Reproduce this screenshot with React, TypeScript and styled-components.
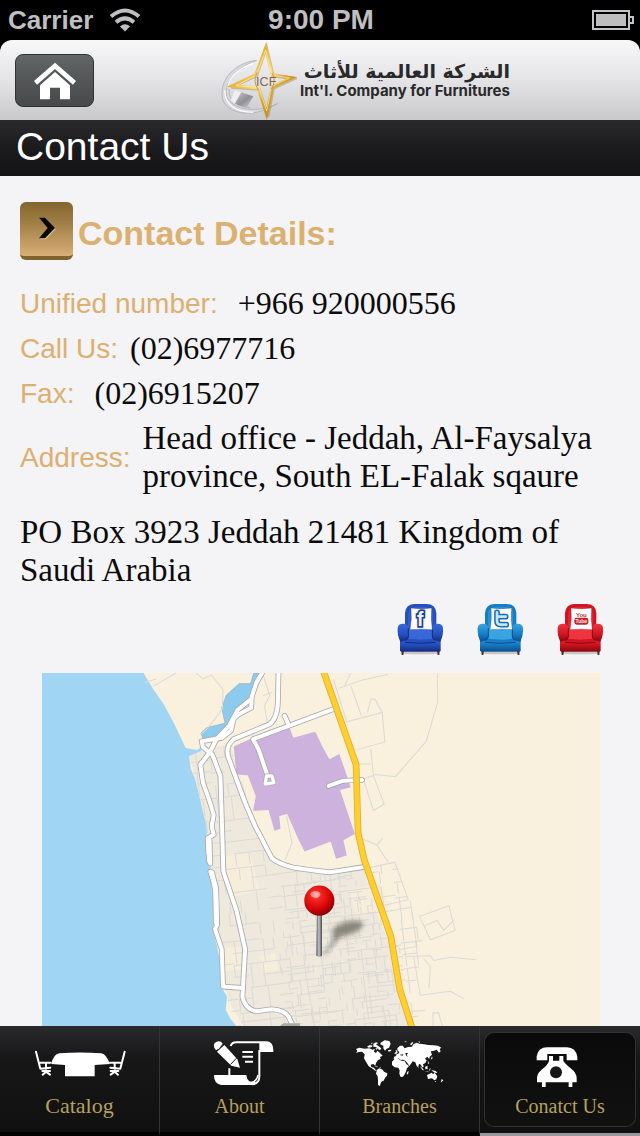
import React from "react";
import styled, { createGlobalStyle, css } from "styled-components";

const GlobalStyle = createGlobalStyle`
  * { box-sizing: border-box; }
  html, body { margin: 0; background: #000; }
  body { font-family: "Liberation Sans", Arial, sans-serif; }
`;

const sans = `"Liberation Sans", Arial, sans-serif`;
const serif = `"Liberation Serif", "Times New Roman", serif`;
const gold = "#dbb071";

const Screen = styled.div`
  display: flex;
  flex-direction: column;
  height: 100vh;
  min-height: 900px;
  background: #000;
`;

const StatusBar = styled.div`
  display: grid;
  grid-template-columns: 1fr auto 1fr;
  align-items: center;
  height: 40px;
  padding: 0 6px 0 8px;
  color: #bfbfc1;
  font: bold 26px/40px ${sans};
`;

const StatusSide = styled.div<{ $end?: boolean }>`
  display: flex;
  align-items: center;
  gap: 16px;
  justify-content: ${(p) => (p.$end ? "flex-end" : "flex-start")};
`;

const Clock = styled.span`
  font-size: 28px;
`;

const Header = styled.header`
  display: flex;
  align-items: center;
  gap: 126px;
  height: 80px;
  padding-left: 15px;
  border-radius: 12px 12px 0 0;
  background: linear-gradient(#f8f8f9, #e4e4e6 50%, #c9c9cc);
`;

const HomeButton = styled.button`
  display: block;
  width: 79px;
  height: 53px;
  padding: 0;
  border: 1px solid #2f3133;
  border-radius: 8px;
  background: linear-gradient(#636667, #535657 50%, #47494a);
  svg { display: block; width: 100%; height: 100%; }
`;

const Brand = styled.div`
  display: flex;
  align-items: center;
  gap: 3px;
  color: #29292b;
  svg { display: block; width: 77px; height: 80px; flex: none; }
`;

const BrandNames = styled.div`
  display: flex;
  flex-direction: column;
  white-space: nowrap;
`;

const BrandArabic = styled.span`
  font: bold 19px/22px "DejaVu Sans", sans-serif;
`;

const BrandLatin = styled.span`
  font: 700 15px/18px Inter, sans-serif;
`;

const TitleBar = styled.div`
  height: 56px;
  padding-left: 16px;
  background: linear-gradient(#2a2a2c, #1b1b1d 50%, #131315);
  h1 {
    margin: 0;
    color: #fff;
    font: 39px/54px ${sans};
  }
`;

const Content = styled.main`
  flex: 1;
  min-height: 0;
  display: flex;
  flex-direction: column;
  padding: 26px 36px 0 20px;
  background: #f4f3f5;
`;

const SectionHeading = styled.div`
  display: flex;
  align-items: center;
  gap: 5px;
  height: 58px;
  h2 {
    margin: 4px 0 0;
    color: ${gold};
    font: bold 34px/40px ${sans};
  }
`;

const ArrowTile = styled.span`
  display: flex;
  width: 53px;
  height: 58px;
  border-radius: 6px;
  border-bottom: 4px solid #82632d;
  background: linear-gradient(#82662f, #a5834b 45%, #d9b077);
  svg { display: block; width: 53px; height: 54px; }
`;

const Details = styled.dl`
  margin: 20px 0 0;
`;

const DetailRow = styled.div<{ $gap: number; $tall?: boolean }>`
  display: flex;
  align-items: center;
  gap: ${(p) => p.$gap}px;
  min-height: 45px;
  ${(p) => p.$tall && css`min-height: 84px;`}
  dt {
    flex: none;
    padding-top: 2px;
    color: ${gold};
    font: 28px/40px ${sans};
  }
  dd {
    margin: 0;
    color: #0b0b0c;
    font: ${(p) => (p.$tall ? 33 : 32)}px/38px ${serif};
  }
`;

const PostBox = styled.p`
  margin: 14px 0 0;
  color: #0b0b0c;
  font: 33px/38px ${serif};
`;

const SocialLinks = styled.div`
  display: flex;
  justify-content: flex-end;
  gap: 33px;
  margin-top: 14px;
  a { display: block; }
  svg { display: block; width: 47px; height: 54px; }
`;

const MapFrame = styled.div`
  flex: 1;
  min-height: 0;
  margin: 16px 4px 0 22px;
  svg { display: block; width: 100%; height: 100%; }
`;

const TabBar = styled.nav`
  display: grid;
  grid-template-columns: repeat(4, 1fr);
  height: 110px;
  background: #050506;
`;

const Tab = styled.a<{ $active?: boolean }>`
  display: flex;
  border-right: 1px solid #343436;
  border-bottom: 4px solid #000;
  padding: 7px 5px;
  background: linear-gradient(#2a2a2c, #171718 30%, #101011);
  text-decoration: none;
  color: #b7a05c;
  ${(p) => p.$active && css`
    border-right: 0;
    border-bottom: 3px solid #99989b;
  `}
`;

const TabFace = styled.span<{ $active?: boolean }>`
  flex: 1;
  display: flex;
  flex-direction: column;
  align-items: center;
  gap: 7px;
  padding-top: 4px;
  border-radius: 9px;
  svg { display: block; width: 100px; height: 50px; flex: none; }
  ${(p) => p.$active && css`
    background: linear-gradient(#0a0a0b, #111112);
    box-shadow: 0 0 0 1px #343436;
  `}
`;

const TabLabel = styled.span<{ $large?: boolean }>`
  font: ${(p) => (p.$large ? 22 : 20)}px/24px ${serif};
`;

const WifiIcon = () => (
  <svg width="32" height="24" viewBox="0 0 32 24" fill="none" stroke="#bfbfc1" aria-hidden="true">
    <path d="M2 8.6Q16-3.6 30 8.6" strokeWidth="4" />
    <path d="M7 14.2Q16 6.6 25 14.2" strokeWidth="4" />
    <path d="M11 18.4Q16 14 21 18.4L16 23.5Z" fill="#bfbfc1" stroke="none" />
  </svg>
);

const BatteryIcon = () => (
  <svg width="42" height="20" viewBox="0 0 42 20" aria-hidden="true">
    <rect x="1" y="1" width="36" height="18" fill="none" stroke="#c4c4c6" strokeWidth="2" />
    <rect x="4" y="4" width="30" height="12" fill="#bdbdbf" />
    <path d="M38 7h3v6h-3" fill="none" stroke="#c4c4c6" strokeWidth="2" />
  </svg>
);

const HomeIcon = () => (
  <svg viewBox="48 165 231 153" fill="#fff" aria-hidden="true">
    <path d="M102 243L165 188L228 243L219 254L165 207L111 254Z" />
    <path d="M120 256L165 216L210 256V298H180V263H150V298H120Z" />
  </svg>
);

const BrandMark = () => (
  <svg viewBox="60 9 231 240" aria-hidden="true">
    <defs>
      <linearGradient id="gold" x1="0" y1="0" x2="1" y2="1">
        <stop offset="0" stopColor="#c88b12" />
        <stop offset=".35" stopColor="#efc04b" />
        <stop offset=".5" stopColor="#f8dc7c" />
        <stop offset=".65" stopColor="#dca52b" />
        <stop offset="1" stopColor="#b9790c" />
      </linearGradient>
      <linearGradient id="silver" x1="0" y1="0" x2="1" y2="1">
        <stop offset="0" stopColor="#dcdce0" />
        <stop offset=".6" stopColor="#8f8f97" />
        <stop offset="1" stopColor="#d4d4d8" />
      </linearGradient>
    </defs>
    <path d="M170 70C100 78 62 130 66 176C70 226 150 252 232 200C172 230 96 220 80 178C72 140 106 92 170 70Z" fill="#d9d9dd" stroke="#a6a6ac" strokeWidth="2" />
    <path d="M158 80C104 98 84 132 84 152M74 160C74 204 108 226 160 226" fill="none" stroke="#fbfbfc" strokeWidth="4" />
    <path d="M88 156C84 186 104 206 150 212" fill="none" stroke="#b4b4ba" strokeWidth="3" />
    <path d="M104 160L160 178L140 212C118 208 104 200 92 190Z" fill="url(#silver)" />
    <path d="M104 160L124 166L104 200L92 190Z" fill="#f0f0f3" />
    <path d="M197 28L217 113L281 122L218 150L201 236L175 153L92 147L167 113Z" fill="none" stroke="#8b6a28" strokeWidth="10" opacity=".35" transform="translate(2 3)" />
    <path d="M197 32L216 113L276 122L217 150L200 232L175 153L96 147L167 113Z" fill="none" stroke="url(#gold)" strokeWidth="9" />
    <path d="M197 40L215 114L268 123L215 149L200 222L177 151L108 146L169 115Z" fill="none" stroke="#fff1ae" strokeWidth="2" />
    <path d="M172 106Q156 132 176 160M216 108Q230 132 214 156" fill="none" stroke="#c99b3f" strokeWidth="3" />
    <text x="168" y="146" fontFamily="Liberation Sans, sans-serif" fontSize="38" fill="#8a6844">ICF</text>
  </svg>
);

const ChevronIcon = () => (
  <svg viewBox="61 37 159 162" aria-hidden="true">
    <path d="M120 87h18l30 31-30 31h-18l28-31Z" fill="#e6c590" />
    <path d="M118 84h18l30 31-30 31h-18l26-31Z" fill="#080706" />
  </svg>
);

type ChairProps = {
  id: string;
  light: string;
  base: string;
  dark: string;
  children: React.ReactNode;
};

const Chair = ({ id, light, base, dark, children }: ChairProps) => (
  <svg viewBox="0 0 141 162" aria-hidden="true">
    <defs>
      <linearGradient id={id} x1="0" y1="0" x2="0" y2="1">
        <stop offset="0" stopColor={light} />
        <stop offset=".6" stopColor={base} />
        <stop offset="1" stopColor={dark} />
      </linearGradient>
    </defs>
    <ellipse cx="70" cy="150" rx="60" ry="4" fill="#c9c6c4" />
    <path d="M13 138h9l-3 18h-5ZM119 138h9l-1 18h-5Z" fill="#46302c" />
    <path d="M24 90V30Q26 3 54 3H88Q116 3 118 30V90Z" fill={base} />
    <path d="M33 80V34Q34 11 56 11H86Q108 11 109 34V80Z" fill={light} opacity=".55" />
    <path d="M9 92H131V142Q131 146 126 146H14Q9 146 9 142Z" fill={`url(#${id})`} />
    <path d="M32 78H108L116 106Q70 114 24 106Z" fill={light} />
    <path d="M24 106Q70 114 116 106V116Q70 122 24 116Z" fill={base} />
    <path d="M2 74Q4 62 18 62Q34 62 34 76V104Q34 110 26 112L10 116Q0 96 2 74ZM138 74Q136 62 122 62Q106 62 106 76V104Q106 110 114 112L130 116Q140 96 138 74Z" fill={`url(#${id})`} />
    <path d="M34 76V102L26 112M106 76V102L114 112M24 118Q70 124 116 118" fill="none" stroke={dark} strokeWidth="3" />
    <path d="M42 15Q73 19 104 15Q101 48 106 80Q73 77 39 80Q45 48 42 15Z" fill="#fbfafc" stroke={dark} strokeWidth="1" />
    {children}
  </svg>
);

const FacebookChair = () => (
  <Chair id="chairBlue" light="#3868d8" base="#2450bd" dark="#142a80">
    <text x="60" y="68" fontFamily="Liberation Sans, sans-serif" fontWeight="bold" fontSize="58" fill="#e8f2fd" stroke="#20408f" strokeWidth="10" paintOrder="stroke">f</text>
  </Chair>
);

const TwitterChair = () => (
  <Chair id="chairSky" light="#39a4e2" base="#167cc3" dark="#0a4c90">
    <path d="M60 28V54Q60 65 72 65H88M60 41H86" fill="none" stroke="#1a6caa" strokeWidth="17" strokeLinecap="round" />
    <path d="M60 28V54Q60 65 72 65H88M60 41H86" fill="none" stroke="#c4e6f8" strokeWidth="8" strokeLinecap="round" />
  </Chair>
);

const YoutubeChair = () => (
  <Chair id="chairRed" light="#ef3440" base="#d01422" dark="#86070f">
    <text x="73" y="41" textAnchor="middle" fontFamily="Liberation Sans, sans-serif" fontWeight="bold" fontSize="18" fill="#bf3a3d">You</text>
    <rect x="52" y="44" width="42" height="21" rx="7" fill="#c3282e" />
    <text x="73" y="60" textAnchor="middle" fontFamily="Liberation Sans, sans-serif" fontWeight="bold" fontSize="15" fill="#fbe9e9">Tube</text>
  </Chair>
);

/** Pseudo-random value in 0..1 that is stable for a street cell. */
const cellValue = (x: number, y: number, seed: number) => {
  const v = Math.sin(x * 127.1 + y * 311.7 + seed * 74.7) * 43758.5453;
  return v - Math.floor(v);
};

/** A loose street grid: some block edges are left out so that blocks vary in size. */
const streets = (x0: number, y0: number, x1: number, y1: number, w: number, h: number, keep: number) => {
  let d = "";
  for (let r = 0; y0 + r * h < y1; r++) {
    for (let c = 0; x0 + c * w < x1; c++) {
      const x = x0 + c * w;
      const y = y0 + r * h + (cellValue(c >> 2, r, 3) - 0.5) * 14;
      if (cellValue(c, r, 1) < keep) d += `M${x} ${y.toFixed(0)}h${w}`;
      if (cellValue(c, r, 2) < keep) d += `M${x + Math.round(cellValue(r >> 1, c, 4) * 12)} ${y.toFixed(0)}v${h}`;
    }
  }
  return d;
};

const mainRoads = [
  "M700 36L680 70L666 112L664 146L626 166L612 178L604 214L576 236L516 246L520 264L548 286L572 350L577 500L581 636L620 752L646 868L638 1010Q646 1048 680 1054L724 1048Q764 1050 776 1070L792 1104",
  "M664 120L624 152L598 200L560 240L540 280L512 316L520 370L538 420L552 466L546 500L552 526L534 536L536 580L542 612",
  "M542 636L558 680L562 796L556 808L576 868L580 980L638 984",
  "M746 36L744 130Q742 180 718 196L612 240Q586 262 596 294L646 430L676 500L726 596Q744 612 790 624Q850 634 900 638L1004 622",
  "M910 150L670 240L686 270L712 346",
  "M776 196L764 170",
];

const CityMap = () => (
  <svg viewBox="36 42 1674 1056" preserveAspectRatio="xMidYMin slice" role="img" aria-label="Map of Jeddah">
    <defs>
      <clipPath id="city">
        <path d="M480 290L530 268L600 256L660 440L730 600L800 630L1000 625L1094 608L1134 720L1180 860L1150 1000L1170 1098H620L590 1010L575 900L552 700L530 500Z" />
      </clipPath>
      <clipPath id="core">
        <path d="M740 900L800 650L960 640L1040 760L1120 880L1110 1098H780Z" />
      </clipPath>
      <radialGradient id="ball" cx=".4" cy=".32" r=".68">
        <stop offset="0" stopColor="#ff8f84" />
        <stop offset=".2" stopColor="#f42a24" />
        <stop offset=".65" stopColor="#d90508" />
        <stop offset="1" stopColor="#8c0003" />
      </radialGradient>
      <linearGradient id="stick">
        <stop offset="0" stopColor="#54545a" />
        <stop offset=".45" stopColor="#c4c4ca" />
        <stop offset="1" stopColor="#47474d" />
      </linearGradient>
      <filter id="soft" x="-30%" y="-30%" width="160%" height="160%">
        <feGaussianBlur stdDeviation="8" />
      </filter>
    </defs>
    <rect x="36" y="42" width="1674" height="1056" fill="#f9f0de" />
    <path d="M36 42H342L372 92L404 138L436 198L468 266L500 272L520 262L510 284L478 290L484 330L508 386L524 440L532 500L530 560L542 620L546 680L556 750L550 810L562 860L576 930L580 990L592 1010L588 1050L602 1076L620 1098H36Z" fill="#a0d6f3" />
    <path d="M576 146L590 108L628 74H662L672 42H700L670 112L612 176L588 224L520 238L514 222L530 206L586 192Z" fill="#8dcbee" stroke="#9aa9ae" strokeWidth="2" />
    <path d="M480 290L530 268L600 256L660 440L730 600L800 630L1000 625L1040 760L1094 900L1140 1098H640L600 1030L580 960L560 800L552 700L530 500Z" fill="#eee9dc" />
    <path d="M582 590L660 580L690 690L612 712L586 640ZM584 864L632 860L634 930L584 934ZM956 690L1046 670L1080 740L980 770ZM690 890L736 880L746 930L700 940Z" fill="#f7eddb" />
    <g fill="none" stroke="#dcd9d6" strokeWidth="3">
      <g clipPath="url(#city)">
        <path d={streets(420, 240, 1300, 1300, 42, 36, 0.66)} transform="rotate(-7 800 700)" />
      </g>
      <g clipPath="url(#core)">
        <path d={streets(640, 560, 1240, 1300, 26, 22, 0.5)} transform="rotate(-7 800 700)" />
      </g>
      <path d="M370 82L440 42M345 70L380 60M500 42L520 60L545 48L580 92L578 150L540 200L515 225M700 50L720 110L704 140L714 200M700 110L726 100" />
      <path d="M1221 42L1222 130L1188 246L1096 352L1036 346L1000 360L1030 454L1062 434L1030 350L1022 270M980 272L1064 248L1056 160L950 188L910 60M925 88L995 64L1074 46M962 80L994 170M1012 160L1022 120L1036 122L1056 160M944 80L962 42M980 314L1020 314M1000 540L1040 556L1058 536M1040 556L1074 608" />
      <path d="M1010 626L1094 608L1134 720L1050 740M1140 724L1160 860L1106 870M1168 770L1256 738L1274 812L1200 840ZM1180 800L1220 782L1240 812L1272 780M1130 890L1200 888L1210 902L1260 892L1336 900M1150 890L1170 1006L1260 994L1300 1016M1180 896L1200 920L1196 986M1144 1054L1184 1052M1208 1098V1060L1224 1058L1236 1098" />
      <path d="M770 470L786 550L766 600" />
    </g>
    <path d="M612 262L660 240L780 208L790 236L856 218L874 256L898 300L928 284L962 384L930 392L974 524L940 542L950 588L918 598L902 546L824 576L804 536L772 464L748 470L752 508L734 514L716 452L670 454L678 410L654 348L620 346Z" fill="#ccb2dc" />
    <g fill="none" strokeLinejoin="round" strokeLinecap="round">
      {mainRoads.map((d) => <path key={d} d={d} stroke="#a9a9ad" strokeWidth="17" />)}
      <path d="M546 640L558 690L560 790M538 540L540 606" stroke="#a9a9ad" strokeWidth="20" />
      <path d="M896 380L940 364L996 362" stroke="#9b9bac" strokeWidth="16" />
      {mainRoads.map((d) => <path key={d} d={d} stroke="#fefefe" strokeWidth="12" />)}
      <path d="M546 640L558 690L560 790M538 540L540 606" stroke="#fefefe" strokeWidth="15" />
      <path d="M896 380L940 364L996 362" stroke="#fefefe" strokeWidth="12" />
      <path d="M710 350L726 350L732 370L706 374Z" stroke="#a9a9ad" strokeWidth="14" />
      <path d="M710 350L726 350L732 370L706 374Z" stroke="#fefefe" strokeWidth="10" />
      <path d="M878 30L978 316L984 520L1002 600L1082 830L1108 986L1146 1106" stroke="#e4ac2f" strokeWidth="20" />
      <path d="M878 30L978 316L984 520L1002 600L1082 830L1108 986L1146 1106" stroke="#fdd02f" strokeWidth="15" />
    </g>
    <path d="M760 1090H810V1098H750Z" fill="#a7ada2" />
    <path d="M874 890L912 836Q896 806 932 792Q976 776 1000 790Q994 822 932 830L884 884Z" fill="#55554c" opacity=".65" filter="url(#soft)" />
    <path d="M861 756H876V888Q868 893 859 888Z" fill="url(#stick)" />
    <circle cx="868" cy="723" r="45" fill="url(#ball)" />
    <ellipse cx="856" cy="704" rx="15" ry="10" fill="#fff" opacity=".45" />
  </svg>
);

const CatalogIcon = () => (
  <svg viewBox="90 50 300 150" aria-hidden="true">
    <path d="M154 131Q160 102 178 99Q240 94 304 99Q320 102 329 131L284 134V168H195V134Z" fill="#fff" />
    <g fill="none" stroke="#fff" strokeWidth="6" strokeLinecap="round" strokeLinejoin="round">
      <path d="M108 94L121 145L151 142M121 127H152M138 129V155M128 163L138 154L150 163M127 152H150" />
      <path d="M374 94L361 145L331 142M361 127H330M344 129V155M354 163L344 154L332 163M355 152H332" />
    </g>
  </svg>
);

const AboutIcon = () => (
  <svg viewBox="570 50 300 150" aria-hidden="true">
    <path d="M692 77Q696 66 708 66H800Q818 68 817 92H778V168Q778 191 756 192" fill="none" stroke="#fff" strokeWidth="6" />
    <path d="M778 66H800Q820 68 818 94H778Z" fill="#fff" />
    <path d="M642 164H736Q738 184 752 186L766 180L764 194H664Q642 192 642 164Z" fill="#fff" />
    <path d="M737 164Q740 186 754 186Q770 184 774 164" fill="none" stroke="#fff" strokeWidth="4" />
    <path d="M727 95H759M727 109H759M735 124H759M688 144V166" fill="none" stroke="#fff" strokeWidth="6" />
    <path d="M643 82Q638 68 650 64Q662 60 668 70L658 84L648 90Z" fill="#fff" />
    <path d="M651 94L673 74L712 117L720 142L694 136Z" fill="#fff" />
    <path d="M692 132L709 114" stroke="#151516" strokeWidth="3" />
  </svg>
);

const WorldIcon = () => (
  <svg viewBox="90 50 300 150" fill="#fff" aria-hidden="true">
    <path d="M108 86L118 82L134 85L148 84L158 88L164 85L162 94L168 98L172 91L180 98L188 106L180 110L182 116L174 119L168 128L166 136L160 131L152 133L154 140L162 142L166 148L172 150L166 151L156 144L146 138L138 124L132 114L134 102L126 94L116 95L108 98L112 92Z" />
    <path d="M142 78L150 74L158 76L154 81L144 82ZM160 70L168 66L174 68L168 73L174 76L184 84L180 90L174 86L168 80L160 79ZM152 68L158 67L156 71ZM166 84L172 84L170 89Z" />
    <path d="M182 67L194 60L208 62L212 70L207 82L200 85L195 91L190 84L190 76L181 72ZM204 89L214 88L213 92L206 94ZM162 136L174 139L171 141ZM178 141L184 142L181 144Z" />
    <path d="M171 148L178 144L188 148L192 154L202 159L201 166L195 173L191 181L184 184L181 192L180 197L174 194L174 180L173 168L168 160Z" />
    <path d="M222 99L228 95L227 88L231 91L233 98L228 101ZM232 90L232 84L240 76L248 76L254 84L264 80L276 79L280 72L290 67L298 70L312 72L324 74L340 75L354 76L364 82L359 86L362 93L357 97L350 88L340 92L332 93L336 103L329 109L328 116L322 109L315 115L320 120L316 128L309 132L311 140L306 141L303 133L297 131L294 141L290 137L286 126L278 123L273 130L268 137L262 128L256 121L249 118L243 119L235 114L230 118L221 116L222 109L229 107L227 103L235 100L238 95Z" />
    <path d="M270 72L277 65L280 67L274 75ZM252 64L260 63L258 66ZM294 63L300 64L300 68Z" />
    <path d="M216 124L224 116L235 115L244 121L254 122L259 131L267 137L261 144L258 153L255 160L249 169L242 170L238 160L239 150L235 142L224 141L216 134ZM262 154L266 152L264 162L260 162Z" />
    <path d="M300 138L307 143L312 150L307 149ZM315 140L322 136L323 146L317 147ZM328 146L332 144L329 153ZM334 149L347 152L352 158L344 157L338 153ZM313 152L326 154L325 156ZM323 120L328 130L325 131ZM336 108L338 114L332 118Z" />
    <path d="M321 164L328 161L334 157L340 161L344 157L352 168L349 177L343 180L336 174L324 176ZM344 183L349 183L346 186ZM365 176L370 180L362 187ZM295 140L297 142L295 144Z" />
    <path d="M256 98L264 98L260 104L264 109L259 107ZM239 103L250 102L248 106L242 105Z" fill="#19191a" />
  </svg>
);

const PhoneIcon = () => (
  <svg viewBox="570 50 300 150" overflow="visible" aria-hidden="true">
    <path d="M650 120V108Q654 81 682 81H741Q768 82 772 110V120H740V101H682V120Z" fill="#fff" />
    <path d="M687 107H699V121H718V107H730V122Q736 130 752 144Q770 158 770 174V186H757V200H746V186H677V200H666V186H651V172Q652 157 670 144Q684 132 687 122Z" fill="#fff" />
    <circle cx="708" cy="156" r="18" fill="#171718" />
  </svg>
);

const details = [
  { label: "Unified number:", value: "+966 920000556", gap: 20 },
  { label: "Call Us:", value: "(02)6977716", gap: 12 },
  { label: "Fax:", value: "(02)6915207", gap: 20 },
  { label: "Address:", value: "Head office - Jeddah, Al-Faysalya province, South EL-Falak sqaure", gap: 12, tall: true },
];

const tabs = [
  { label: "Catalog", Icon: CatalogIcon, large: true },
  { label: "About", Icon: AboutIcon },
  { label: "Branches", Icon: WorldIcon },
  { label: "Conatct Us", Icon: PhoneIcon, active: true },
];

export default function App() {
  return (
    <>
      <GlobalStyle />
      <Screen>
        <StatusBar>
          <StatusSide>
            <span>Carrier</span>
            <WifiIcon />
          </StatusSide>
          <Clock>9:00 PM</Clock>
          <StatusSide $end>
            <BatteryIcon />
          </StatusSide>
        </StatusBar>
        <Header>
          <HomeButton type="button" aria-label="Home">
            <HomeIcon />
          </HomeButton>
          <Brand>
            <BrandMark />
            <BrandNames>
              <BrandArabic lang="ar" dir="rtl">الشركة العالمية للأثاث</BrandArabic>
              <BrandLatin>Int'l. Company for Furnitures</BrandLatin>
            </BrandNames>
          </Brand>
        </Header>
        <TitleBar>
          <h1>Contact Us</h1>
        </TitleBar>
        <Content>
          <SectionHeading>
            <ArrowTile>
              <ChevronIcon />
            </ArrowTile>
            <h2>Contact Details:</h2>
          </SectionHeading>
          <Details>
            {details.map((d) => (
              <DetailRow key={d.label} $gap={d.gap} $tall={d.tall}>
                <dt>{d.label}</dt>
                <dd>{d.value}</dd>
              </DetailRow>
            ))}
          </Details>
          <PostBox>PO Box 3923 Jeddah 21481 Kingdom of Saudi Arabia</PostBox>
          <SocialLinks>
            <a href="#facebook" aria-label="Facebook"><FacebookChair /></a>
            <a href="#twitter" aria-label="Twitter"><TwitterChair /></a>
            <a href="#youtube" aria-label="YouTube"><YoutubeChair /></a>
          </SocialLinks>
          <MapFrame>
            <CityMap />
          </MapFrame>
        </Content>
        <TabBar>
          {tabs.map(({ label, Icon, large, active }) => (
            <Tab key={label} href={`#${label}`} $active={active}>
              <TabFace $active={active}>
                <Icon />
                <TabLabel $large={large}>{label}</TabLabel>
              </TabFace>
            </Tab>
          ))}
        </TabBar>
      </Screen>
    </>
  );
}
